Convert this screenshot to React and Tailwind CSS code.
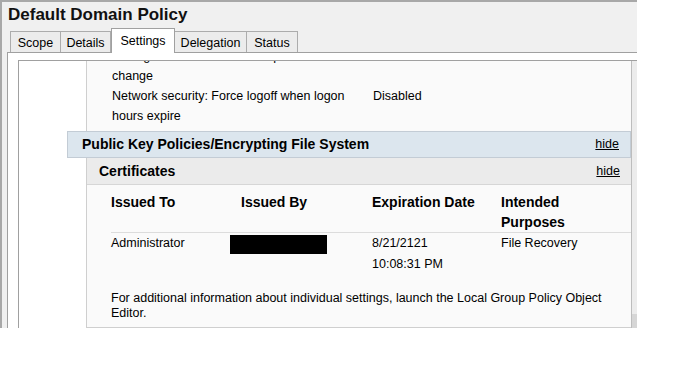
export default function App() {
  const tabs = [
    { label: "Scope", w: "w-[51px]", cls: "ml-[8px]" },
    { label: "Details", w: "w-[51px]", cls: "-ml-px" },
    { label: "Settings", w: "w-[64px]", cls: "", selected: true },
    { label: "Delegation", w: "w-[73px]", cls: "-ml-px" },
    { label: "Status", w: "w-[52px]", cls: "-ml-px" },
  ];
  return (
    <div className="w-[683px] h-[384px] bg-white overflow-hidden font-['Liberation_Sans',Arial,sans-serif] text-black">
      <div className="w-[637px] h-[328px] bg-[#f0f0f0] border-t-2 border-l-2 border-[#a8a8a8] flex flex-col overflow-hidden">
        <div className="h-[26px] pl-[6px] pt-[2px] text-[17px] font-bold leading-[22px] text-[#111]">
          Default Domain Policy
        </div>
        <div className="h-[24px] flex items-end">
          {tabs.map((t) =>
            t.selected ? (
              <div
                key={t.label}
                className={`${t.w} ${t.cls} h-[25px] -mb-px relative z-10 bg-white border-l border-t border-r border-[#a0a0a0] flex justify-center pt-[3px] text-[12.5px] leading-[18px]`}
              >
                {t.label}
              </div>
            ) : (
              <div
                key={t.label}
                className={`${t.w} ${t.cls} h-[21px] bg-[#ececec] border-l border-t border-r border-[#acacac] flex justify-center pt-[3px] text-[12.5px] leading-[16px]`}
              >
                {t.label}
              </div>
            )
          )}
        </div>
        <div className="flex-1 ml-[5px] border-l border-t border-[#a0a0a0] bg-white pt-[7px] pl-[10px] flex flex-col min-h-0">
          <div className="flex-1 flex border-l border-t border-[#a0a0a0] bg-white overflow-hidden min-h-0">
            <div className="flex-1 flex flex-col overflow-hidden text-[12.5px]">
              {/* previous settings section */}
              <div className="ml-[67px] -mt-[15px] border-l border-[#cfcfcf] bg-[#fafafa] pl-[25px] pb-[5px]">
                <div className="grid grid-cols-[261px_1fr] leading-[20px]">
                  <div>
                    <div>Manager hash value on next password</div>
                    <div>change</div>
                  </div>
                  <div></div>
                  <div className="pr-[6px]">Network security: Force logoff when logon hours expire</div>
                  <div>Disabled</div>
                </div>
              </div>
              {/* Public Key Policies header */}
              <div className="ml-[48px] h-[27px] shrink-0 border border-[#c3ccd5] bg-[#dce6ee] flex items-center justify-between pl-[14px] pr-[11px]">
                <span className="text-[14px] font-bold">Public Key Policies/Encrypting File System</span>
                <span className="underline">hide</span>
              </div>
              {/* Certificates */}
              <div className="ml-[67px] border-l border-b border-[#cfcfcf] bg-[#fafafa] flex flex-col">
                <div className="h-[27px] shrink-0 bg-[#ebebeb] border-b border-[#d6d6d6] flex items-center justify-between pl-[12px] pr-[11px]">
                  <span className="text-[14px] font-bold">Certificates</span>
                  <span className="underline">hide</span>
                </div>
                <div className="pl-[24px] pt-[7px]">
                  <div className="grid grid-cols-[130px_131px_129px_1fr] border-b border-[#dcdcdc] text-[14px] font-bold leading-[20px]">
                    <div>Issued To</div>
                    <div>Issued By</div>
                    <div>Expiration Date</div>
                    <div className="max-w-[100px]">Intended Purposes</div>
                  </div>
                  <div className="grid grid-cols-[130px_131px_129px_1fr] leading-[21px]">
                    <div>Administrator</div>
                    <div>
                      <div className="w-[97px] h-[19px] mt-[2px] -ml-[11px] bg-black"></div>
                    </div>
                    <div>
                      <div>8/21/2121</div>
                      <div>10:08:31 PM</div>
                    </div>
                    <div>File Recovery</div>
                  </div>
                  <p className="mt-[16px] pr-[10px] pb-[6px] leading-[15px]">
                    For additional information about individual settings, launch the Local Group Policy Object Editor.
                  </p>
                </div>
              </div>
            </div>
            <div className="w-[6px] shrink-0 border-l border-[#bdbdbd] bg-[#ececec] flex flex-col justify-end">
              <div className="h-[14px] bg-[#d6d6d6]"></div>
            </div>
          </div>
        </div>
      </div>
    </div>
  );
}
